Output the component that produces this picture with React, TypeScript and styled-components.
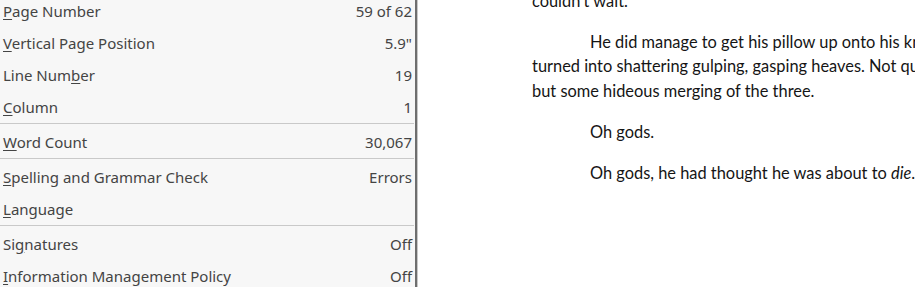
import React from "react";
import styled, { createGlobalStyle } from "styled-components";

const GlobalStyle = createGlobalStyle`
  html, body {
    margin: 0;
    padding: 0;
    background: #ffffff;
    overflow: hidden;
  }
`;

type Item = {
  label: string;
  key: number;
  value?: string;
  separatorAfter?: boolean;
};

const items: Item[] = [
  { label: "Page Number", key: 0, value: "59 of 62" },
  { label: "Vertical Page Position", key: 0, value: "5.9\"" },
  { label: "Line Number", key: 8, value: "19" },
  { label: "Column", key: 0, value: "1", separatorAfter: true },
  { label: "Word Count", key: 0, value: "30,067", separatorAfter: true },
  { label: "Spelling and Grammar Check", key: 0, value: "Errors" },
  { label: "Language", key: 0, separatorAfter: true },
  { label: "Signatures", key: 2, value: "Off" },
  { label: "Information Management Policy", key: 0, value: "Off" },
];

const Page = styled.div`
  display: flex;
  width: 915px;
  height: 287px;
  overflow: hidden;
  background: #ffffff;
`;

const Menu = styled.div`
  flex: 0 0 415px;
  display: flex;
  flex-direction: column;
  margin-top: -5px;
  min-height: 292px;
  background: #f7f7f7;
  border-right: 2px solid #6e6e6e;
  box-shadow: 1px 0 0 #c8c8c8;
  font-family: "Noto Sans", "Open Sans", sans-serif;
  font-size: 15px;
  color: #444444;
`;

const Row = styled.div`
  flex: 0 0 32px;
  display: flex;
  align-items: center;
  justify-content: space-between;
  padding: 0 3px 0 3px;
`;

const Value = styled.span`
  white-space: nowrap;
`;

const Label = styled.span`
  white-space: nowrap;
`;

const Key = styled.span`
  text-decoration: underline;
  text-underline-offset: 2px;
`;

const Separator = styled.div`
  flex: 0 0 1px;
  margin: 0 1px 2px 0;
  background: #c9c9c9;
`;

const Doc = styled.div`
  flex: 1;
  overflow: hidden;
  padding: 0 0 0 115px;
  margin-top: -11.5px;
  font-family: "Lato", "Open Sans", sans-serif;
  font-size: 16.4px;
  color: #151515;
`;

const Paragraph = styled.div<{ $indent?: boolean }>`
  margin-bottom: 16.5px;
  padding-left: ${({ $indent }) => ($indent ? "58px" : "0")};
`;

const Line = styled.div<{ $indent?: boolean }>`
  height: 24.5px;
  line-height: 24.5px;
  white-space: nowrap;
  text-indent: ${({ $indent }) => ($indent ? "58px" : "0")};
`;

function renderLabel(item: Item) {
  const { label, key } = item;
  return (
    <Label>
      {label.slice(0, key)}
      <Key>{label[key]}</Key>
      {label.slice(key + 1)}
    </Label>
  );
}

export default function App() {
  return (
    <>
      <GlobalStyle />
      <Page>
        <Menu>
          {items.map((item) => (
            <React.Fragment key={item.label}>
              <Row>
                {renderLabel(item)}
                {item.value && <Value>{item.value}</Value>}
              </Row>
              {item.separatorAfter && <Separator />}
            </React.Fragment>
          ))}
        </Menu>
        <Doc>
          <Paragraph>
            <Line>couldn’t wait.</Line>
          </Paragraph>
          <Paragraph>
            <Line $indent>He did manage to get his pillow up onto his knees before</Line>
            <Line>turned into shattering gulping, gasping heaves. Not quite</Line>
            <Line>but some hideous merging of the three.</Line>
          </Paragraph>
          <Paragraph $indent>
            <Line>Oh gods.</Line>
          </Paragraph>
          <Paragraph $indent>
            <Line>
              Oh gods, he had thought he was about to <em>die</em>.
            </Line>
          </Paragraph>
        </Doc>
      </Page>
    </>
  );
}
